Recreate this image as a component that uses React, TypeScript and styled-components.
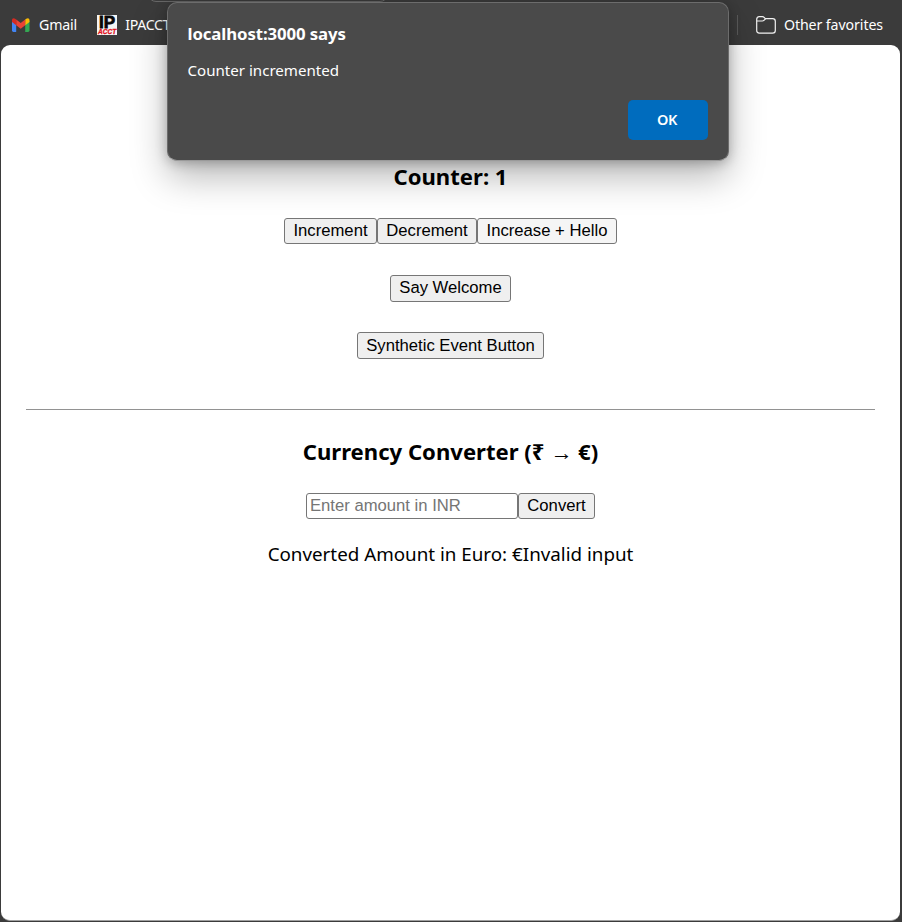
import React, { useState } from "react";
import styled, { createGlobalStyle } from "styled-components";

const GlobalStyle = createGlobalStyle`
  * { box-sizing: border-box; }
  html, body { margin: 0; padding: 0; background: #3b3b3b; overflow: hidden; }
`;

const ui = `"Segoe UI", "Noto Sans", "Open Sans", sans-serif`;

const Window = styled.div`
  position: relative;
  display: flex;
  flex-direction: column;
  width: 902px;
  height: 922px;
  overflow: hidden;
  background: #3b3b3b;
  font-family: ${ui};
`;

const BookmarksBar = styled.header`
  display: flex;
  align-items: center;
  flex: none;
  height: 45px;
  padding: 4px 19px 0 11px;
  color: #fff;
`;

const Bookmark = styled.div<{ $gap: number; $spacing: number }>`
  display: flex;
  align-items: center;
  gap: ${(p) => p.$gap}px;
  font-size: 14.2px;
  line-height: 20px;
  letter-spacing: ${(p) => p.$spacing}px;
  white-space: nowrap;

  & + & { margin-left: 20px; }
`;

const BarSpacer = styled.div`
  flex: 1;
`;

const Divider = styled.div`
  width: 1px;
  height: 20px;
  margin-right: 18px;
  background: #5c5c5c;
`;

const Toolbar = styled.div`
  position: absolute;
  top: -30px;
  left: 148px;
  width: 240px;
  height: 32px;
  border: 1px solid #686868;
  border-radius: 8px;
`;

const Page = styled.main`
  display: flex;
  flex-direction: column;
  align-items: center;
  flex: none;
  height: 876px;
  margin: 0 2px 0 1px;
  padding: 115px 25px 0;
  border-radius: 9px;
  border-bottom: 1px solid #a0a0a0;
  background: #fff;
  color: #000;
`;

const Heading = styled.h2`
  margin: 0;
  font-size: 22.1px;
  font-weight: 700;
  line-height: 32px;
  white-space: nowrap;
`;

const Row = styled.div<{ $top: number }>`
  display: flex;
  margin-top: ${(p) => p.$top}px;
`;

const Button = styled.button<{ $width: number; $height?: number; $hovered?: boolean; $drop?: boolean }>`
  width: ${(p) => p.$width}px;
  height: ${(p) => p.$height ?? 26}px;
  padding: ${(p) => (p.$drop ? "1px 0 0" : "0 0 1px")};
  border: 1px solid #767676;
  border-radius: 3px;
  background: ${(p) => (p.$hovered ? "#f5f5f5" : "#efefef")};
  color: #000;
  font: 16.67px/22px "Liberation Sans", Arial, sans-serif;
  white-space: nowrap;
`;

const AmountInput = styled.input`
  width: 212px;
  height: 26px;
  padding: 0 3px 1px;
  border: 1px solid #767676;
  border-radius: 3px;
  background: #fff;
  font: 16.67px/22px "Liberation Sans", Arial, sans-serif;

  &::placeholder { color: #757575; opacity: 1; }
`;

const Rule = styled.hr`
  width: 849px;
  height: 1px;
  margin: 50px 0 25px;
  border: 0;
  background: #929292;
`;

const Result = styled.p`
  margin: 21px 0 0;
  font-size: 18.8px;
  line-height: 28px;
  white-space: nowrap;
`;

const Dialog = styled.section`
  position: absolute;
  top: 2px;
  left: 167px;
  display: flex;
  flex-direction: column;
  width: 562px;
  height: 159px;
  padding: 19px 20px 0 19.5px;
  border: 1px solid #6c6c6c;
  border-bottom-color: #9a9a9a;
  border-radius: 10px;
  background: #4a4a4a;
  color: #fff;
  box-shadow: 0 16px 36px rgba(0, 0, 0, 0.28), 0 2px 12px rgba(0, 0, 0, 0.25);
`;

const DialogTitle = styled.div`
  font-size: 16.8px;
  font-weight: 700;
  line-height: 24px;
  letter-spacing: -0.1px;
`;

const DialogMessage = styled.div`
  margin-top: 12px;
  font-size: 15.1px;
  line-height: 24px;
`;

const Confirm = styled.button`
  align-self: flex-end;
  width: 80px;
  height: 40px;
  margin-top: 18px;
  padding: 0 2px 2px 0;
  border: 0;
  border-radius: 5px;
  background: #006cbe;
  color: #fff;
  font: 600 14.5px ${ui};
  letter-spacing: -0.4px;
`;

const GmailIcon = () => (
  <svg width="19" height="14" viewBox="0 0 19 14">
    <path d="M1 3v9.6Q1 14 2.4 14H5.2V6L1 3Z" fill="#4285f4" />
    <path d="M14.2 6v8h2.9q1.4 0 1.4-1.4V3Z" fill="#34a853" />
    <path d="M14.2 1.5V7.2l4.3-3.1V2Q18.4.2 16.8.2q-.8 0-1.5.5Z" fill="#fbbc04" />
    <path d="M5.2 1.5v5.7l4.5 3.5 4.5-3.5V1.5L9.7 5Z" fill="#ea4335" />
    <path d="M1 2v2.1l4.2 3.1V1.5L4.1.7Q3.4.2 2.6.2 1 .2 1 2Z" fill="#d52b23" />
  </svg>
);

const Badge = styled.span`
  display: flex;
  flex-direction: column;
  align-items: center;
  width: 20px;
  height: 20px;
  padding-top: 1px;
  background: #f5f5f5;
`;

const BadgeTop = styled.span`
  color: #080808;
  font: 700 17px/13px "Liberation Sans", sans-serif;
  letter-spacing: 0;
  -webkit-text-stroke: 0.8px #080808;
`;

const BadgeBottom = styled.span`
  color: #e3121b;
  font: italic 700 6.5px/6px "Liberation Sans", sans-serif;
  letter-spacing: 0;
  -webkit-text-stroke: 0.3px #e3121b;
`;

const FolderIcon = () => (
  <svg width="20" height="18" viewBox="0 0 20 18" fill="none" stroke="#f2f2f2" strokeWidth="1.2">
    <path d="M.7 3.4Q.7.7 3.3.7h3.1q1 0 1.7.7l1.2 1.3h7.3q2.7 0 2.7 2.6v9.1q0 2.7-2.7 2.7H3.3q-2.6 0-2.6-2.7Z" />
    <path d="M.7 5h5.7q.9 0 1.5-.6l1.6-1.6" />
  </svg>
);

export default function App() {
  const [amount, setAmount] = useState("");

  return (
    <>
      <GlobalStyle />
      <Window>
        <BookmarksBar>
          <Bookmark $gap={9} $spacing={-0.15}>
            <GmailIcon />
            Gmail
          </Bookmark>
          <Bookmark $gap={8} $spacing={-0.3}>
            <Badge>
              <BadgeTop>IP</BadgeTop>
              <BadgeBottom>ACCT</BadgeBottom>
            </Badge>
            IPACCT
          </Bookmark>
          <BarSpacer />
          <Divider />
          <Bookmark $gap={8} $spacing={-0.1}>
            <FolderIcon />
            Other favorites
          </Bookmark>
        </BookmarksBar>
        <Toolbar />

        <Page>
          <Heading>Counter: 1</Heading>
          <Row $top={26}>
            <Button $width={93}>Increment</Button>
            <Button $width={100}>Decrement</Button>
            <Button $width={140} $hovered>Increase + Hello</Button>
          </Row>
          <Row $top={31}>
            <Button $width={121} $height={27}>Say Welcome</Button>
          </Row>
          <Row $top={30}>
            <Button $width={187} $height={27} $drop>Synthetic Event Button</Button>
          </Row>
          <Rule />
          <Heading>Currency Converter (₹ → €)</Heading>
          <Row $top={26}>
            <AmountInput
              placeholder="Enter amount in INR"
              value={amount}
              onChange={(e) => setAmount(e.target.value)}
            />
            <Button $width={77}>Convert</Button>
          </Row>
          <Result>Converted Amount in Euro: €Invalid input</Result>
        </Page>

        <Dialog role="alertdialog">
          <DialogTitle>localhost:3000 says</DialogTitle>
          <DialogMessage>Counter incremented</DialogMessage>
          <Confirm>OK</Confirm>
        </Dialog>
      </Window>
    </>
  );
}
